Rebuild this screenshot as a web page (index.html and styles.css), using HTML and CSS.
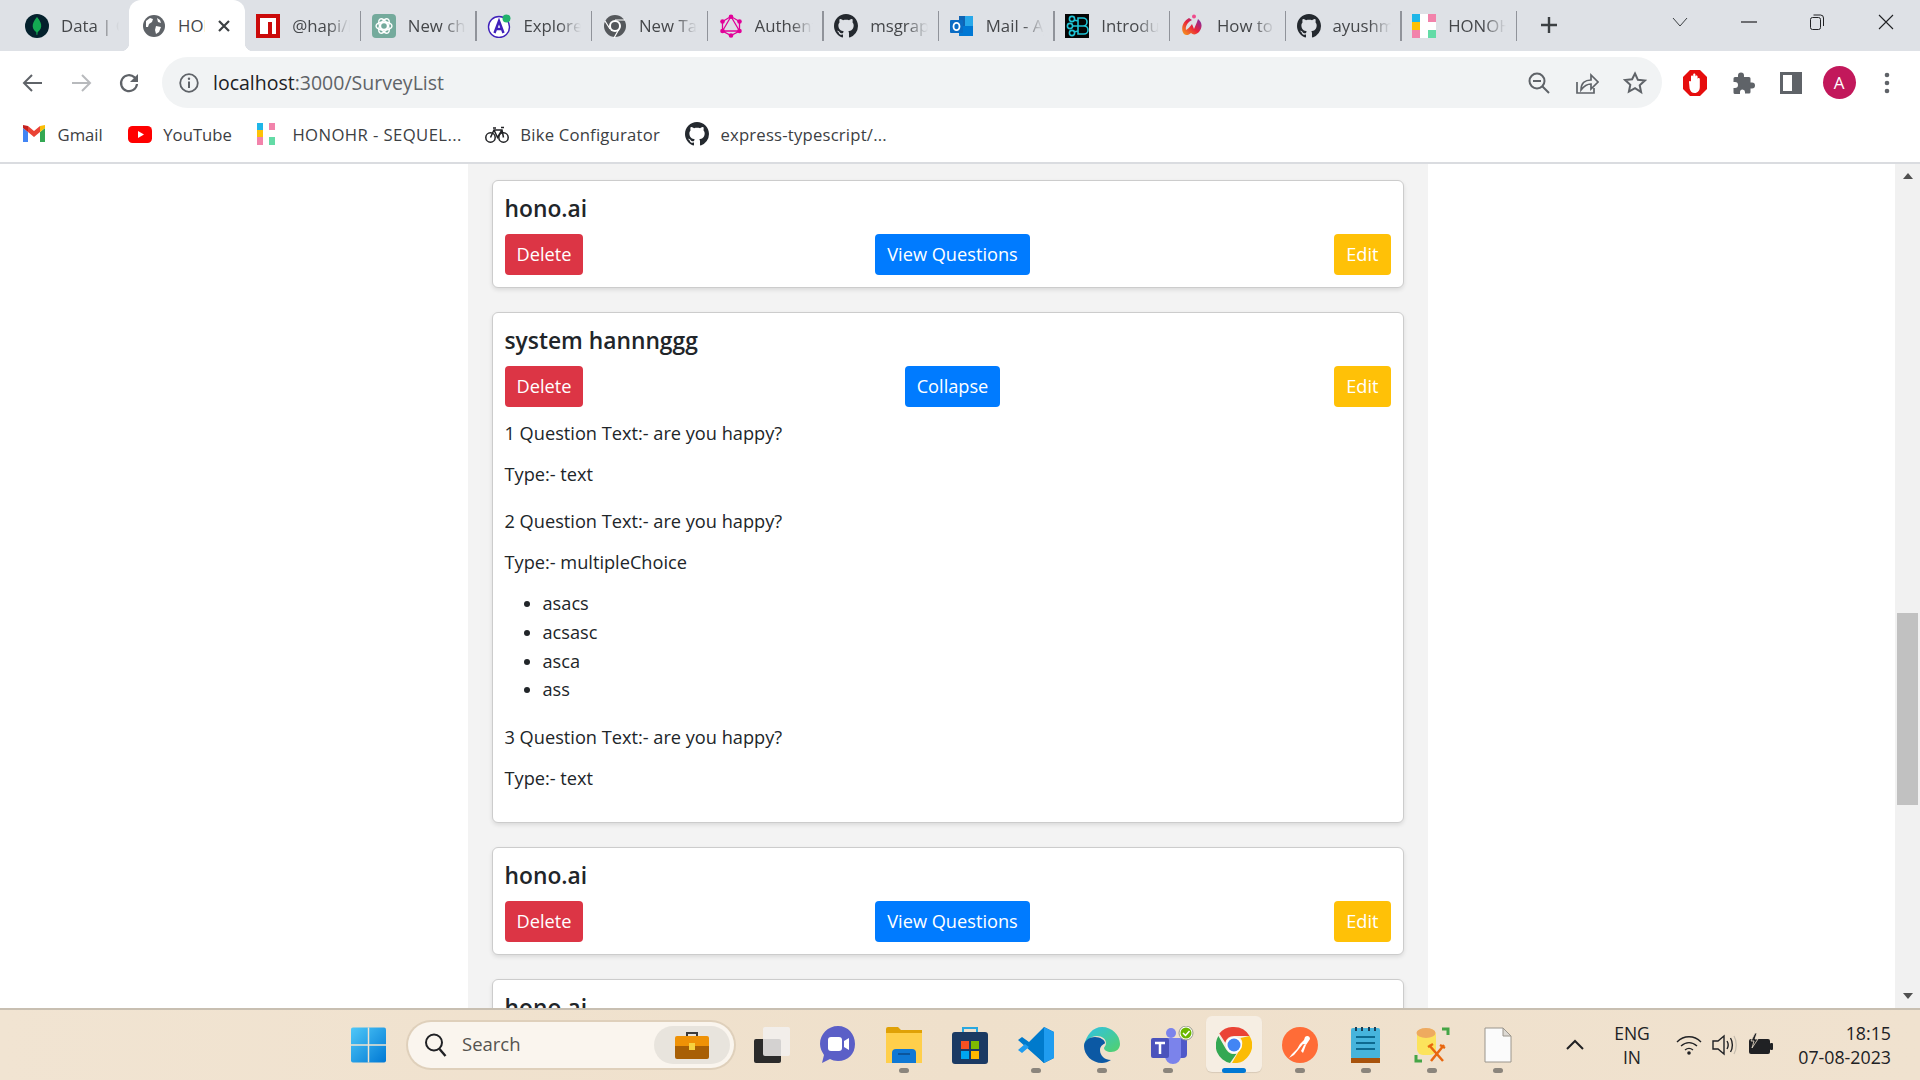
FILE: index.html
```html
<!DOCTYPE html>
<html lang="en">
<head>
    <meta charset="UTF-8">
    <title>HONO - SurveyList</title>
    <link rel="stylesheet" href="styles.css">
</head>
<body>
    <svg class="defs" width="0" height="0">
        <symbol id="github" viewBox="0 0 16 16"><path fill="#24292f" d="M8 0C3.58 0 0 3.58 0 8c0 3.54 2.29 6.53 5.47 7.59.4.07.55-.17.55-.38 0-.19-.01-.82-.01-1.49-2.01.37-2.53-.49-2.69-.94-.09-.23-.48-.94-.82-1.13-.28-.15-.68-.52-.01-.53.63-.01 1.08.58 1.23.82.72 1.21 1.87.87 2.33.66.07-.52.28-.87.51-1.07-1.78-.2-3.64-.89-3.64-3.95 0-.87.31-1.59.82-2.15-.08-.2-.36-1.02.08-2.12 0 0 .67-.21 2.2.82.64-.18 1.32-.27 2-.27.68 0 1.36.09 2 .27 1.53-1.04 2.2-.82 2.2-.82.44 1.1.16 1.92.08 2.12.51.56.82 1.27.82 2.15 0 3.07-1.87 3.75-3.65 3.95.29.25.54.73.54 1.48 0 1.07-.01 1.93-.01 2.2 0 .21.15.46.55.38A8.013 8.013 0 0016 8c0-4.42-3.58-8-8-8z"/></symbol>
        <symbol id="hono" viewBox="0 0 24 24">
            <rect x="0" y="0" width="24" height="24" fill="#fff"/>
            <rect x="0" y="0" width="8" height="8" fill="#1fb6e8"/>
            <rect x="0" y="8" width="8" height="8" fill="#fdc107"/>
            <rect x="0" y="16" width="8" height="8" fill="#f283ab"/>
            <rect x="16" y="0" width="8" height="8" fill="#f283ab"/>
            <rect x="16" y="16" width="8" height="8" fill="#63dba6"/>
        </symbol>
    </svg>

    <!-- Tab strip -->
    <div class="tabstrip">
        <div class="tab">
            <svg class="fav" viewBox="0 0 24 24"><circle cx="12" cy="12" r="12" fill="#04212d"/><path fill="#13aa52" d="M12 3c3 3.500 4.500 6.500 4.200 9.500-.3 3-2.400 4.700-3.500 5.500l-.4 3h-.7l-.4-3c-1.200-.8-3.300-2.500-3.500-5.500C7.500 9.500 9 6.500 12 3z"/></svg>
            <span class="tab-title">Data | Cloud</span>
        </div>
        <div class="tab active">
            <svg class="fav" viewBox="0 0 24 24"><circle cx="12" cy="12" r="11" fill="#5f6368"/><path fill="#fff" d="M4 7l4-3 3 1-1 3-3 2-1 3-2 0zM14 12l5 1-2 5-3 2-1-4zM15 4l3 2 1 3-3-1z"/></svg>
            <span class="tab-title short">HONO</span>
            <svg class="tab-close" viewBox="0 0 14 14"><path d="M2 2l10 10M12 2L2 12" stroke="#3c4043" stroke-width="2.200" fill="none"/></svg>
        </div>
        <div class="tab sep">
            <svg class="fav" viewBox="0 0 24 24"><rect width="24" height="24" fill="#cb0a0a"/><path fill="#fff" d="M4 4h16v16h-4V8h-4v12H4z"/></svg>
            <span class="tab-title">@hapi/hapi</span>
        </div>
        <div class="tab sep">
            <svg class="fav" viewBox="0 0 24 24"><rect width="24" height="24" rx="4" fill="#74aa9c"/><g fill="none" stroke="#fff" stroke-width="1.400"><circle cx="12" cy="12" r="3.500"/><ellipse cx="12" cy="12" rx="8" ry="4"/><ellipse cx="12" cy="12" rx="8" ry="4" transform="rotate(60 12 12)"/><ellipse cx="12" cy="12" rx="8" ry="4" transform="rotate(120 12 12)"/></g></svg>
            <span class="tab-title">New chat</span>
        </div>
        <div class="tab sep">
            <svg class="fav" viewBox="0 0 24 24"><circle cx="12" cy="13" r="10.500" fill="#fff" stroke="#3f20ba" stroke-width="1.400"/><path fill="none" stroke="#3f20ba" stroke-width="2.400" d="M7.500 19L12 7l4.500 12M9 15h6"/><circle cx="19.500" cy="4.500" r="4" fill="#20b26c"/></svg>
            <span class="tab-title">Explorer</span>
        </div>
        <div class="tab sep">
            <svg class="fav" viewBox="0 0 24 24"><circle cx="12" cy="12" r="11" fill="#55585c"/><circle cx="12" cy="12" r="6" fill="#fff"/><circle cx="12" cy="12" r="4" fill="#55585c"/><path d="M12 6h10M7 15L2 7M16 15l-5 9" stroke="#fff" stroke-width="1.200"/></svg>
            <span class="tab-title">New Tab</span>
        </div>
        <div class="tab sep">
            <svg class="fav" viewBox="0 0 24 24"><path fill="none" stroke="#e10098" stroke-width="1.300" d="M12 2.500l8.500 5v9.500L12 21.500 3.500 17V7.500zM12 2.500L3.500 17h17z"/><g fill="#e10098"><circle cx="12" cy="2.800" r="2.300"/><circle cx="20.500" cy="7.500" r="2.300"/><circle cx="20.500" cy="17" r="2.300"/><circle cx="12" cy="21.500" r="2.300"/><circle cx="3.500" cy="17" r="2.300"/><circle cx="3.500" cy="7.500" r="2.300"/></g></svg>
            <span class="tab-title">Authentication</span>
        </div>
        <div class="tab sep">
            <svg class="fav"><use href="#github"/></svg>
            <span class="tab-title">msgraph</span>
        </div>
        <div class="tab sep">
            <svg class="fav" viewBox="0 0 24 24"><path fill="#0f64b4" d="M9 2h14v20H9z"/><path fill="#28a8ea" d="M15 2h8v10h-8z"/><path fill="#0078d4" d="M9 12h14v10H9z"/><rect x="0" y="6" width="13" height="13" rx="1" fill="#0a6cc4"/><ellipse cx="6.500" cy="12.500" rx="3" ry="3.700" fill="none" stroke="#fff" stroke-width="1.800"/></svg>
            <span class="tab-title">Mail - Ayush</span>
        </div>
        <div class="tab sep">
            <svg class="fav" viewBox="0 0 24 24"><rect width="24" height="24" fill="#050505"/><g fill="none" stroke="#1fc4d6" stroke-width="1.600"><circle cx="7" cy="5" r="2.600"/><circle cx="5" cy="12" r="2.600"/><circle cx="7" cy="19" r="2.600"/><path d="M13 4h5a3.500 3.500 0 010 8h-5zM13 12h6a3.800 3.800 0 010 8h-6zM9 6l4 1M7.500 12H13M9 18l4-1"/></g></svg>
            <span class="tab-title">Introduction</span>
        </div>
        <div class="tab sep">
            <svg class="fav" viewBox="0 0 24 24"><defs><linearGradient id="wg" x1="0" y1="1" x2="1" y2="0"><stop offset="0" stop-color="#f7a11b"/><stop offset=".5" stop-color="#e9243a"/><stop offset="1" stop-color="#6f2bb8"/></linearGradient></defs><path fill="url(#wg)" d="M8 4l3 2C7 8 4 12 5 16c2-1 4-3 6-6l2 5 3-7 1-3c4 3 5 8 1 13-3 3-6 3-8 1-2 2-5 3-7 1C-1 15 2 7 8 4z"/><circle cx="13" cy="2.500" r="2" fill="#ef4a8c"/></svg>
            <span class="tab-title">How to use</span>
        </div>
        <div class="tab sep">
            <svg class="fav"><use href="#github"/></svg>
            <span class="tab-title">ayushmaan</span>
        </div>
        <div class="tab sep">
            <svg class="fav"><use href="#hono"/></svg>
            <span class="tab-title">HONOHR</span>
        </div>
        <svg class="new-tab" viewBox="0 0 18 18"><path d="M9 1v16M1 9h16" stroke="#3c4043" stroke-width="2.400" fill="none"/></svg>
        <div class="win-controls">
            <div class="win-btn"><svg width="16" height="16" viewBox="0 0 16 16"><path d="M1 4l7 8 7-8" stroke="#3c4043" fill="none"/></svg></div>
            <div class="win-btn"><svg width="16" height="16" viewBox="0 0 16 16"><path d="M0 8h16" stroke="#202124" stroke-width="1.200" fill="none"/></svg></div>
            <div class="win-btn"><svg width="16" height="16" viewBox="0 0 16 16"><rect x="1.500" y="3.500" width="10" height="12" rx="2" stroke="#202124" fill="none"/><path d="M4.500 1h7a3 3 0 013 3v8" stroke="#202124" fill="none"/></svg></div>
            <div class="win-btn"><svg width="16" height="16" viewBox="0 0 16 16"><path d="M1 1l14 14M15 1L1 15" stroke="#202124" stroke-width="1.100" fill="none"/></svg></div>
        </div>
    </div>

    <!-- Address bar row -->
    <div class="toolbar">
        <div class="tool-btn"><svg width="24" height="24" viewBox="0 0 24 24"><path d="M21 12H4M11 4l-8 8 8 8" stroke="#5f6368" stroke-width="2" fill="none"/></svg></div>
        <div class="tool-btn"><svg width="24" height="24" viewBox="0 0 24 24"><path d="M3 12h17M13 4l8 8-8 8" stroke="#b8babd" stroke-width="2" fill="none"/></svg></div>
        <div class="tool-btn"><svg width="24" height="24" viewBox="0 0 24 24"><path d="M20 13a8 8 0 11-2.400-6.600L20 9" stroke="#5f6368" stroke-width="2.200" fill="none"/><path d="M21 3v8h-8z" fill="#5f6368"/></svg></div>
        <div class="omnibox">
            <svg width="20" height="20" viewBox="0 0 20 20"><circle cx="10" cy="10" r="8.800" stroke="#5f6368" stroke-width="1.800" fill="none"/><path d="M10 8.500V15" stroke="#5f6368" stroke-width="2"/><circle cx="10" cy="5.800" r="1.200" fill="#5f6368"/></svg>
            <span class="url">localhost<span class="url-rest">:3000/SurveyList</span></span>
            <div class="omni-actions">
                <div class="tool-btn"><svg width="24" height="24" viewBox="0 0 24 24"><circle cx="10" cy="10" r="7.500" stroke="#5f6368" stroke-width="2" fill="none"/><path d="M6 10h8M15.500 15.500L22 22" stroke="#5f6368" stroke-width="2" fill="none"/></svg></div>
                <div class="tool-btn"><svg width="24" height="24" viewBox="0 0 24 24"><path d="M2 11v11h17v-5" stroke="#5f6368" stroke-width="1.700" fill="none"/><path d="M6 19c0-7 4-10 10-10V4l7 7-7 7v-5c-4 0-7 2-10 6z" stroke="#5f6368" stroke-width="1.700" fill="none"/></svg></div>
                <div class="tool-btn"><svg width="24" height="24" viewBox="0 0 24 24"><path d="M12 2.500l2.900 6.300 6.900.8-5.100 4.700 1.400 6.800L12 17.200l-6.100 3.400 1.400-6.800-5.100-4.700 6.900-.8z" stroke="#5f6368" stroke-width="2" fill="none"/></svg></div>
            </div>
        </div>
        <div class="tool-btn ext-first"><svg width="26" height="28" viewBox="0 0 26 28"><path fill="#e60d0d" d="M8 1h10l7 7v12l-7 7H8l-7-7V8z"/><path fill="#fff" d="M7 13c0-1.200 2-1.200 2 0V7.500c0-1.500 2.200-1.500 2.200 0V5.500c0-1.500 2.200-1.500 2.200 0v2c0-1.500 2.200-1.500 2.200 0v2.500c0-1.500 2.200-1.500 2.200 0V18c0 3.500-2 6-5.200 6-2.800 0-4-1.500-5-4.500z"/></svg></div>
        <div class="tool-btn"><svg width="24" height="24" viewBox="0 0 24 24"><path fill="#5f6368" d="M10 1.500a3 3 0 013 3V6h5a1.500 1.500 0 011.500 1.500v4h1.500a3 3 0 010 6h-1.500v3.500a1.500 1.500 0 01-1.500 1.500H14v-1.500a2.500 2.500 0 00-5 0V23H4a1.500 1.500 0 01-1.500-1.500V17H4a3 3 0 000-6H2.500V7.500A1.500 1.500 0 014 6h3V4.500a3 3 0 013-3z"/></svg></div>
        <div class="tool-btn"><svg width="22" height="22" viewBox="0 0 22 22"><rect width="22" height="22" fill="#5f6368"/><rect x="3" y="3" width="9" height="16" fill="#fff"/></svg></div>
        <div class="tool-btn"><div class="avatar">A</div></div>
        <div class="tool-btn"><svg width="8" height="24" viewBox="0 0 8 24"><circle cx="4" cy="4" r="2.300" fill="#5f6368"/><circle cx="4" cy="12" r="2.300" fill="#5f6368"/><circle cx="4" cy="20" r="2.300" fill="#5f6368"/></svg></div>
    </div>

    <!-- Bookmarks -->
    <div class="bookmarks">
        <div class="bookmark">
            <svg class="fav" viewBox="0 0 24 24"><path fill="#4285f4" d="M1 20h5V10L1 6z"/><path fill="#34a853" d="M18 20h5V6l-5 4z"/><path fill="#ea4335" d="M6 10V4l6 5 6-5v6l-6 5z"/><path fill="#fbbc04" d="M18 4l5-1v3l-5 4z"/><path fill="#c5221f" d="M1 3l5 1v6L1 6z"/></svg>
            <span>Gmail</span>
        </div>
        <div class="bookmark">
            <svg class="fav" viewBox="0 0 24 24"><rect x="0" y="4" width="24" height="17" rx="4.500" fill="#f00"/><path fill="#fff" d="M10 9l6 3.500-6 3.500z"/></svg>
            <span>YouTube</span>
        </div>
        <div class="bookmark wider">
            <svg class="fav" viewBox="0 0 24 24"><rect x="0" y="1" width="6" height="7" fill="#1fb6e8"/><rect x="0" y="8" width="6" height="7" fill="#fdc107"/><rect x="0" y="15" width="6" height="8" fill="#f283ab"/><rect x="12" y="1" width="6" height="7" fill="#f283ab"/><rect x="12" y="15" width="6" height="8" fill="#63dba6"/></svg>
            <span>HONOHR - SEQUEL...</span>
        </div>
        <div class="bookmark wide">
            <svg class="fav" viewBox="0 0 24 24"><g fill="none" stroke="#202124" stroke-width="1.500"><circle cx="5.500" cy="15.500" r="4.700"/><circle cx="18.500" cy="15.500" r="4.700"/><path d="M5.500 15.500L9 8h8l1.500 7.500M9 8l3.500 7.500L17 8M8 6h3M16 5.500h3"/></g></svg>
            <span>Bike Configurator</span>
        </div>
        <div class="bookmark wide">
            <svg class="fav"><use href="#github"/></svg>
            <span>express-typescript/...</span>
        </div>
    </div>

    <!-- Page -->
    <div class="viewport">
        <div class="page">
            <main class="survey-list">
                <div class="survey-card">
                    <h4 class="survey-title">hono.ai</h4>
                    <div class="survey-actions">
                        <button class="btn btn-delete">Delete</button>
                        <button class="btn btn-main">View Questions</button>
                        <button class="btn btn-edit">Edit</button>
                    </div>
                </div>

                <div class="survey-card">
                    <h4 class="survey-title">system hannnggg</h4>
                    <div class="survey-actions">
                        <button class="btn btn-delete">Delete</button>
                        <button class="btn btn-main">Collapse</button>
                        <button class="btn btn-edit">Edit</button>
                    </div>
                    <div class="questions">
                        <div class="question">
                            <p>1 Question Text:- are you happy?</p>
                            <p>Type:- text</p>
                        </div>
                        <div class="question">
                            <p>2 Question Text:- are you happy?</p>
                            <p>Type:- multipleChoice</p>
                            <ul>
                                <li>asacs</li>
                                <li>acsasc</li>
                                <li>asca</li>
                                <li>ass</li>
                            </ul>
                        </div>
                        <div class="question">
                            <p>3 Question Text:- are you happy?</p>
                            <p>Type:- text</p>
                        </div>
                    </div>
                </div>

                <div class="survey-card">
                    <h4 class="survey-title">hono.ai</h4>
                    <div class="survey-actions">
                        <button class="btn btn-delete">Delete</button>
                        <button class="btn btn-main">View Questions</button>
                        <button class="btn btn-edit">Edit</button>
                    </div>
                </div>

                <div class="survey-card">
                    <h4 class="survey-title">hono.ai</h4>
                </div>
            </main>
        </div>
        <div class="scrollbar">
            <div class="scroll-arrow up"></div>
            <div class="scroll-track"><div class="scroll-thumb"></div></div>
            <div class="scroll-arrow down"></div>
        </div>
    </div>

    <!-- Windows taskbar -->
    <footer class="taskbar">
        <svg class="start" width="35" height="36" viewBox="0 0 36 36"><defs><linearGradient id="winblue" x1="0" y1="0" x2="1" y2="1"><stop offset="0" stop-color="#4fc8f8"/><stop offset="1" stop-color="#0078d4"/></linearGradient></defs><rect width="36" height="36" rx="2" fill="url(#winblue)"/><path d="M18 0v36M0 18h36" stroke="#f0e3d0" stroke-width="1.500"/></svg>
        <div class="search">
            <svg width="24" height="26" viewBox="0 0 24 26"><circle cx="10" cy="10.500" r="8" stroke="#202124" stroke-width="2" fill="none"/><path d="M15.500 17l6 7" stroke="#202124" stroke-width="2.400"/></svg>
            <span class="search-text">Search</span>
            <div class="search-badge">
                <svg width="34" height="28" viewBox="0 0 34 28"><path d="M12 5V2h10v3" stroke="#3a3a3a" stroke-width="2" fill="none"/><rect y="5" width="34" height="12" rx="2" fill="#ef9206"/><path d="M0 15h34v11a2 2 0 01-2 2H2a2 2 0 01-2-2z" fill="#a85f05"/><rect x="14" y="12" width="6" height="7" fill="#f7d23e"/></svg>
            </div>
        </div>
        <div class="task-icons">
            <div class="task-icon"><svg width="36" height="36" viewBox="0 0 36 36"><rect x="0" y="12" width="27" height="24" rx="2" fill="#2b2b2b"/><rect x="9" y="0" width="27" height="29" rx="2" fill="#f2f0ee" opacity=".85"/></svg></div>
            <div class="task-icon"><svg width="36" height="38" viewBox="0 0 36 38"><path fill="#5b5fc7" d="M18 0c10 0 17 8 17 18s-7 17-17 17c-3 0-6-1-8-2l-8 4 2-8c-2-3-4-7-4-11C0 8 8 0 18 0z"/><rect x="8" y="11" width="14" height="14" rx="3" fill="#fff"/><path fill="#fff" d="M24 15l5-3v12l-5-3z"/></svg></div>
            <div class="task-icon"><svg width="36" height="36" viewBox="0 0 36 36"><path fill="#e0a106" d="M0 2a2 2 0 012-2h10l3 3h21v12H0z"/><path fill="#ffcf4b" d="M0 6h36v30H0z"/><path fill="#0f78d4" d="M6 36V26a4 4 0 014-4h16a4 4 0 014 4v10z"/><path d="M12 27h12" stroke="#0b4a8a" stroke-width="1.500"/></svg><span class="dot"></span></div>
            <div class="task-icon"><svg width="36" height="38" viewBox="0 0 36 38"><path d="M11 6V2h14v4" stroke="#29a8e0" stroke-width="2" fill="none"/><rect y="6" width="36" height="32" rx="3" fill="#1b3a63"/><rect x="9" y="15" width="8" height="8" fill="#f25022"/><rect x="19" y="15" width="8" height="8" fill="#7fba00"/><rect x="9" y="25" width="8" height="8" fill="#00a4ef"/><rect x="19" y="25" width="8" height="8" fill="#ffb900"/></svg></div>
            <div class="task-icon"><svg width="36" height="36" viewBox="0 0 36 36"><path fill="#0065a9" d="M26 0l10 5v26l-10 5L10 20l16-2z"/><path fill="#007acc" d="M26 0v36L0 13l4-3 7 5z"/><path fill="#1f9cf0" d="M26 0l10 5v26l-10 5zM0 23l4 3 7-6-4-3z"/></svg><span class="dot"></span></div>
            <div class="task-icon"><svg width="36" height="36" viewBox="0 0 36 36"><defs><linearGradient id="edgeg" x1="0" y1="0" x2="1" y2="1"><stop offset="0" stop-color="#2fc1e8"/><stop offset="1" stop-color="#52d16a"/></linearGradient></defs><path fill="url(#edgeg)" d="M18 0c10 0 18 8 18 17 0 5-4 8-9 8-4 0-7-2-7-4 0-1 2-2 2-5 0-4-4-7-9-7-6 0-11 5-13 10C2 8 9 0 18 0z"/><path fill="#0c59a4" d="M0 19c0-5 5-9 11-9 5 0 10 3 10 6 0 1-5 2-5 7 0 6 5 10 11 10-3 2-6 3-9 3C8 36 0 28 0 19z"/></svg><span class="dot"></span></div>
            <div class="task-icon"><svg class="teams" width="44" height="38" viewBox="0 0 44 38"><circle cx="20" cy="7" r="5" fill="#7b83eb"/><path fill="#5059c9" d="M24 12h10a2 2 0 012 2v14a4 4 0 01-4 4h-8z"/><path fill="#7b83eb" d="M12 12h18v18a8 8 0 01-16 0z"/><rect y="12" width="18" height="20" rx="2" fill="#4b53bc"/><path d="M4 17h10M9 17v11" stroke="#fff" stroke-width="2.500"/><circle cx="35" cy="7" r="7" fill="#fff" stroke="#9a9a8a"/><circle cx="35" cy="7" r="5.500" fill="#6bb700"/><path d="M32 7l2.500 2.500L38.500 5" stroke="#fff" stroke-width="1.500" fill="none"/></svg><span class="dot"></span></div>
            <div class="task-icon current"><svg width="36" height="36" viewBox="0 0 36 36"><path fill="#ea4335" d="M18 0a18 18 0 0115.600 9H18a9 9 0 00-8.700 6.700L3.300 6.500A18 18 0 0118 0z"/><path fill="#34a853" d="M2.400 9L10.200 22.500a9 9 0 0010.300 4.200L14 36A18 18 0 012.400 9z"/><path fill="#fbbc04" d="M33.600 9A18 18 0 0116 36l7.800-13.500A9 9 0 0024.500 11z"/><circle cx="18" cy="18" r="8" fill="#fff"/><circle cx="18" cy="18" r="6.500" fill="#4285f4"/></svg><span class="dot dot-active"></span></div>
            <div class="task-icon"><svg width="36" height="36" viewBox="0 0 36 36"><circle cx="18" cy="18" r="18" fill="#ff6c37"/><path fill="#fff" d="M7 31l5-3 9-11 3 1 4-6c0-3-3-4-5-2l-1 3-4 4-3 5-5 5zM19 24l2 2 3-8-2 0z"/></svg><span class="dot"></span></div>
            <div class="task-icon"><svg width="30" height="36" viewBox="0 0 30 36"><rect y="1" width="29" height="31" rx="2" fill="#46b4dc"/><rect y="31" width="29" height="5" fill="#a8530d"/><path d="M5 10h19M5 16h19M5 22h19" stroke="#0d6a90" stroke-width="2"/><path d="M5 0v4M11 0v4M18 0v4M24 0v4" stroke="#1c3e55" stroke-width="2"/></svg><span class="dot"></span></div>
            <div class="task-icon"><svg width="36" height="36" viewBox="0 0 36 36"><rect x="3" y="2" width="19" height="26" rx="6" fill="#fce35c"/><ellipse cx="12" cy="6" rx="9.500" ry="5" fill="#eeaa5f"/><path d="M28 2h6v6M2 28v6h6" stroke="#45a546" stroke-width="3" fill="none"/><path d="M15 18l14 16M30 18L17 34M14 20l5-3M26 18l5 3" stroke="#e8670f" stroke-width="2.500" fill="none"/></svg><span class="dot"></span></div>
            <div class="task-icon"><svg width="28" height="36" viewBox="0 0 28 36"><path d="M1 1h18l8 8v26H1z" fill="#fbfbfb" stroke="#9a958c"/><path d="M19 1v8h8z" fill="#ddd9d3" stroke="#9a958c"/></svg><span class="dot"></span></div>
        </div>
        <div class="tray">
            <svg class="tray-chevron" width="20" height="12" viewBox="0 0 20 12"><path d="M2 10l8-8 8 8" stroke="#202124" stroke-width="2" fill="none"/></svg>
            <div class="lang"><div>ENG</div><div>IN</div></div>
            <svg width="26" height="22" viewBox="0 0 26 22"><g fill="none" stroke="#202124" stroke-width="1.400"><path d="M1 8c7-7 17-7 24 0M5 12c5-4.500 11-4.500 16 0M9 16c2.500-2 5.500-2 8 0"/></g><circle cx="13" cy="19" r="1.800" fill="#202124"/></svg>
            <svg class="tray-vol" width="26" height="22" viewBox="0 0 26 22"><path d="M1 7h5l6-5v18l-6-5H1z" fill="none" stroke="#202124" stroke-width="1.400"/><path d="M15 7c1.500 2.500 1.500 5.500 0 8M18.500 4c2.500 4 2.500 10 0 14" fill="none" stroke="#202124" stroke-width="1.400"/><path d="M22 2c3 5 3 13 0 18" fill="none" stroke="#c4bcae" stroke-width="1.200"/></svg>
            <svg class="tray-batt" width="26" height="24" viewBox="0 0 26 24"><rect x="1" y="6" width="21" height="15" rx="2" fill="#202124"/><rect x="22" y="10" width="3" height="7" rx="1" fill="#202124"/><path d="M7 0L3 8h3l-2 7 6-9H7l2-6z" fill="#202124" stroke="#f0e3d0" stroke-width=".8"/></svg>
            <div class="clock"><div>18:15</div><div>07-08-2023</div></div>
        </div>
    </footer>
</body>
</html>
```

FILE: styles.css
```css
* {
    box-sizing: border-box;
}

html, body {
    height: 100%;
}

body {
    margin: 0;
    font-family: "Open Sans", "Noto Sans", sans-serif;
    display: flex;
    flex-direction: column;
    height: 1080px;
    width: 1920px;
    overflow: hidden;
    background-color: #fff;
    color: #212529;
}

.defs {
    position: absolute;
}

svg {
    display: block;
    flex: none;
}

.fav {
    width: 24px;
    height: 24px;
}

/* tab strip */
.tabstrip {
    height: 51px;
    flex: none;
    display: flex;
    align-items: stretch;
    padding-left: 13.500px;
    background-color: #dee1e6;
}

.tab {
    position: relative;
    width: 115.6px;
    flex: none;
    display: flex;
    align-items: center;
    gap: 12px;
    padding: 0 10px 0 11.500px;
}

.tab.sep::after {
    content: "";
    position: absolute;
    right: -1px;
    top: 11px;
    height: 30px;
    width: 1.5px;
    background-color: #90939a;
}

.tab.active {
    background-color: #fff;
    border-radius: 12px 12px 0 0;
    padding-left: 13px;
    gap: 12px;
}

.tab.active::before,
.tab.active::after {
    content: "";
    position: absolute;
    bottom: 0;
    width: 8px;
    height: 8px;
}

.tab.active::before {
    left: -8px;
    background: radial-gradient(circle at 0 0, #dee1e6 8px, #fff 8.5px);
}

.tab.active::after {
    right: -8px;
    background: radial-gradient(circle at 100% 0, #dee1e6 8px, #fff 8.5px);
}

.tab-title {
    flex: 1;
    overflow: hidden;
    white-space: nowrap;
    font-size: 16.800px;
    color: #45474a;
    -webkit-mask-image: linear-gradient(to right, #000 62%, transparent 100%);
    mask-image: linear-gradient(to right, #000 62%, transparent 100%);
}

.tab-title.short {
    flex: none;
    width: 27px;
    -webkit-mask-image: none;
    mask-image: none;
}

.tab-close {
    width: 14px;
    height: 14px;
    margin-left: auto;
    margin-right: 6px;
}

.new-tab {
    width: 18px;
    height: 18px;
    margin: 16px 0 0 24px;
}

.win-controls {
    margin-left: auto;
    display: flex;
    align-items: flex-start;
}

.win-btn {
    width: 68.6px;
    height: 44px;
    display: flex;
    align-items: center;
    justify-content: center;
}

/* toolbar */
.toolbar {
    height: 63px;
    flex: none;
    display: flex;
    align-items: flex-start;
    padding: 6px 0 0 9px;
    background-color: #fff;
}

.tool-btn {
    width: 48px;
    height: 51px;
    flex: none;
    display: flex;
    align-items: center;
    justify-content: center;
}

.omnibox {
    width: 1500px;
    height: 51px;
    margin-left: 9px;
    padding-left: 17px;
    display: flex;
    align-items: center;
    gap: 14px;
    border-radius: 26px;
    background-color: #f1f3f4;
}

.url {
    font-size: 19.500px;
    color: #202124;
}

.url-rest {
    color: #5f6368;
}

.omni-actions {
    margin-left: auto;
    margin-right: 3.500px;
    display: flex;
}

.ext-first {
    margin-left: 9px;
}

.avatar {
    width: 33px;
    height: 33px;
    border-radius: 50%;
    background-color: #c2185b;
    color: #fff;
    font-size: 17px;
    line-height: 33px;
    text-align: center;
}

/* bookmarks */
.bookmarks {
    height: 50px;
    flex: none;
    display: flex;
    align-items: center;
    gap: 25px;
    padding: 0 0 8px 22px;
    border-bottom: 2px solid #dadce0;
    background-color: #fff;
}

.bookmark {
    display: flex;
    align-items: center;
    gap: 11.500px;
    font-size: 16.700px;
    color: #3c4043;
}

.bookmark.wide {
    letter-spacing: 0.2px;
}

.bookmark.wider {
    letter-spacing: 0.4px;
    margin-right: -2px;
}

/* page */
.viewport {
    flex: 1;
    min-height: 0;
    display: flex;
    overflow: hidden;
}

.page {
    flex: 1;
    display: flex;
    justify-content: center;
    overflow: hidden;
}

.survey-list {
    width: 960px;
    height: 100%;
    padding: 16px 24px 0;
    background-color: #f3f3f3;
    overflow: hidden;
}

.survey-card {
    background-color: #fff;
    border: 1px solid #ccc;
    border-radius: 6px;
    box-shadow: 0 2px 4px rgba(0, 0, 0, 0.1);
    padding: 12px;
    margin-bottom: 24.600px;
}

.survey-title {
    margin: 0 0 8.600px;
    font-size: 22.800px;
    font-weight: 600;
    line-height: 32px;
    color: #212529;
}

.survey-actions {
    display: grid;
    grid-template-columns: 1fr 1fr 1fr;
    align-items: center;
}

.btn {
    height: 41px;
    padding: 0 12px;
    border: none;
    border-radius: 4px;
    color: #fff;
    font-family: inherit;
    font-size: 18.200px;
    white-space: nowrap;
}

.btn-delete {
    background-color: #dc3545;
    justify-self: start;
}

.btn-main {
    background-color: #007bff;
    justify-self: center;
    margin-left: 10px;
}

.btn-edit {
    background-color: #ffc107;
    justify-self: end;
}

.questions {
    margin-top: 12.700px;
    font-size: 18.200px;
    line-height: 28.600px;
}

.question {
    padding-bottom: 6px;
}

.question:last-child {
    padding-bottom: 4.800px;
}

.question p {
    margin: 0 0 12.400px;
}

.question ul {
    margin: 0 0 13px;
    padding-left: 38px;
}

/* fake scrollbar */
.scrollbar {
    width: 25px;
    flex: none;
    display: flex;
    flex-direction: column;
    background-color: #f1f1f1;
}

.scroll-arrow {
    height: 24px;
    flex: none;
    display: flex;
    align-items: center;
    justify-content: center;
}

.scroll-arrow::before {
    content: "";
    border-left: 5.500px solid transparent;
    border-right: 5.500px solid transparent;
}

.scroll-arrow.up::before {
    border-bottom: 6px solid #505050;
}

.scroll-arrow.down::before {
    border-top: 6px solid #505050;
}

.scroll-track {
    flex: 1;
    padding: 425px 2px 0;
}

.scroll-thumb {
    height: 192px;
    background-color: #c1c1c1;
}

/* taskbar */
.taskbar {
    height: 72px;
    flex: none;
    display: flex;
    align-items: center;
    padding-left: 351px;
    border-top: 2px solid #c8bfb1;
    background: linear-gradient(90deg, #f1e4d2, #efe0cb 50%, #f0e2cf);
}

.search {
    width: 326px;
    height: 46px;
    margin-left: 22px;
    padding: 0 4px 0 16px;
    display: flex;
    align-items: center;
    border-radius: 23px;
    background-color: #faf5ee;
    box-shadow: 0 0 0 2px #dfd0bb;
}

.search-text {
    margin-left: 14px;
    font-size: 18.500px;
    line-height: 24px;
    margin-top: -2px;
    color: #55534f;
}

.search-badge {
    width: 76px;
    height: 38px;
    margin-left: auto;
    display: flex;
    align-items: center;
    justify-content: center;
    border-radius: 19px;
    background-color: #e8e4dd;
}

.task-icons {
    margin-left: 5px;
    display: flex;
}

.task-icon {
    position: relative;
    width: 66px;
    height: 70px;
    display: flex;
    align-items: center;
    justify-content: center;
}

.task-icon.current::before {
    content: "";
    position: absolute;
    top: 6px;
    left: 5px;
    width: 56px;
    height: 56px;
    border-radius: 6px;
    background-color: #f6eee3;
    box-shadow: 0 1px 1px rgba(0, 0, 0, 0.1);
}

.task-icon svg {
    position: relative;
}

.task-icon svg.teams {
    margin-left: 10px;
}

.dot {
    position: absolute;
    bottom: 7px;
    left: 28px;
    width: 10px;
    height: 5px;
    border-radius: 3px;
    background-color: #8b857c;
}

.dot.dot-active {
    left: 21px;
    width: 24px;
    background-color: #0078d4;
}

.tray {
    flex: 1;
    display: flex;
    align-items: center;
    padding-right: 29px;
}

.tray-chevron {
    margin-left: 34px;
}

.lang {
    width: 50px;
    margin: 0 19px 0 22px;
    text-align: center;
    font-size: 17.500px;
    line-height: 24px;
    color: #202124;
}

.tray-vol {
    margin-left: 10px;
}

.tray-batt {
    margin-left: 10px;
}

.clock {
    margin-left: auto;
    text-align: right;
    font-size: 17.800px;
    line-height: 24px;
    color: #202124;
}
```
